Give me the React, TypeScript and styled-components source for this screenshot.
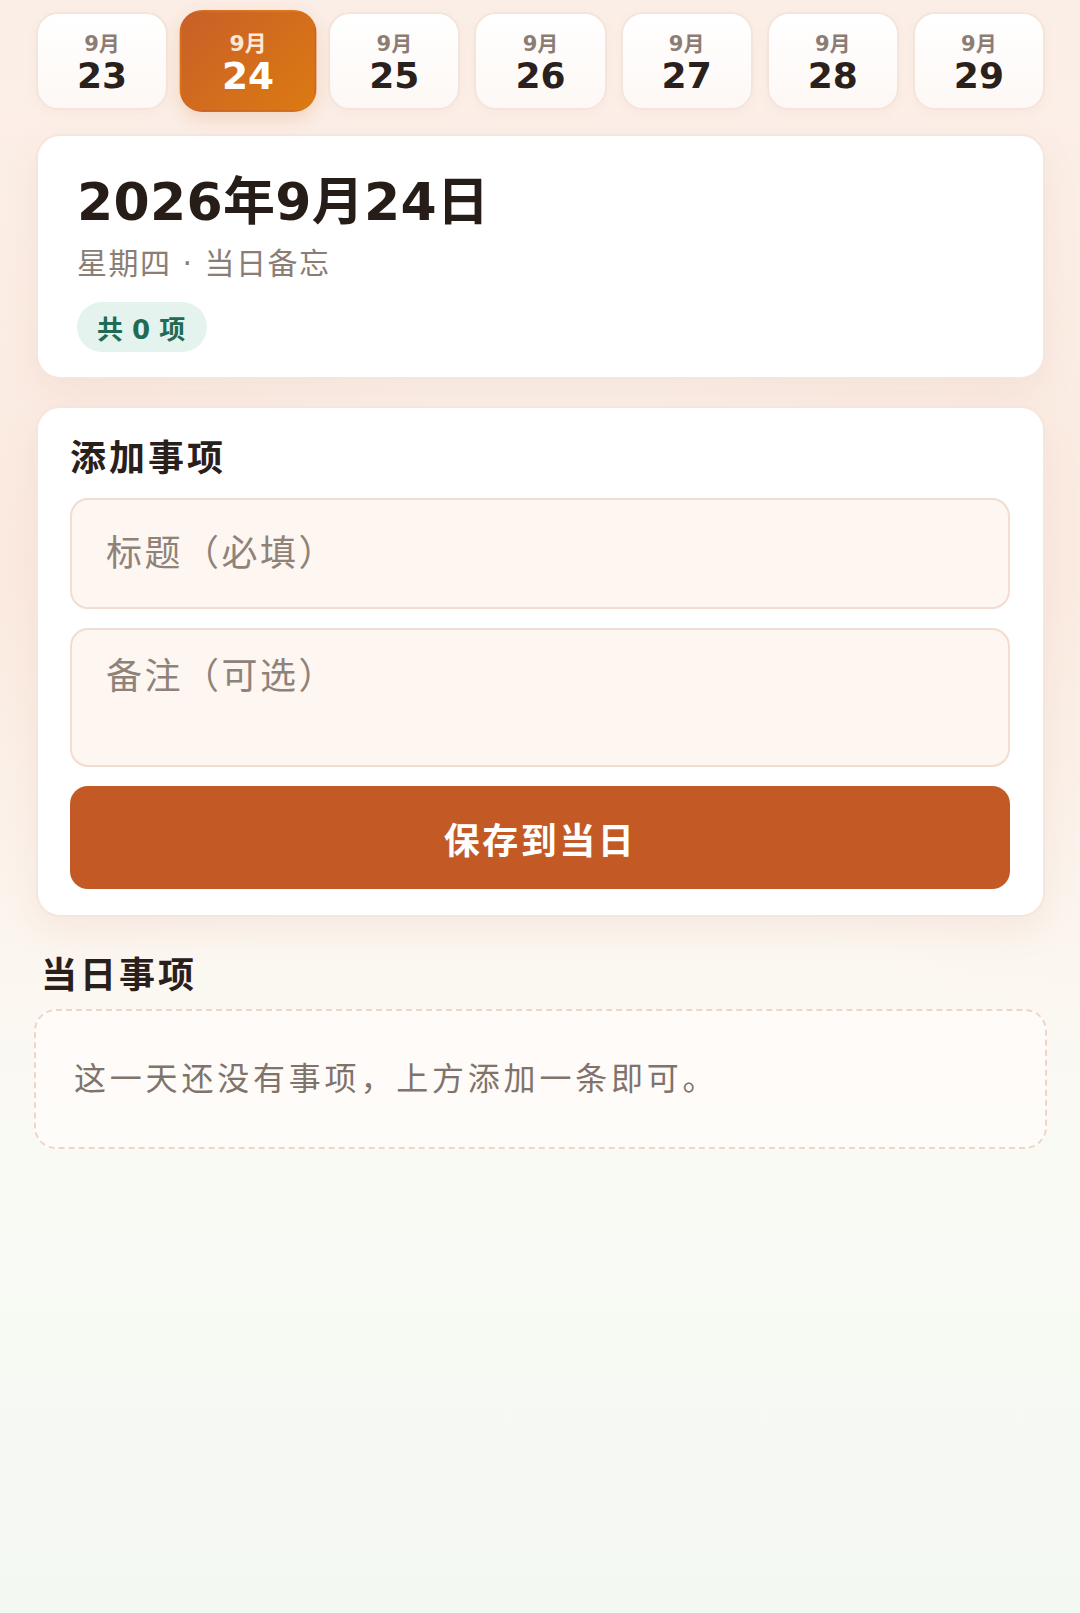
import React from "react";
import styled, { createGlobalStyle } from "styled-components";

const GlobalStyle = createGlobalStyle`
  html, body {
    margin: 0;
    padding: 0;
  }
  body {
    font-family: "DejaVu Sans", "Noto Sans CJK SC", sans-serif;
    background: #f6f8f3;
  }
  * { box-sizing: border-box; }
`;

const Page = styled.div`
  min-height: 1613px;
  padding: 12px 35px 40px 36px;
  background:
    radial-gradient(ellipse 60% 40% at 0% 35%, rgba(250, 226, 212, 0.5), rgba(250, 226, 212, 0) 70%),
    radial-gradient(ellipse 60% 40% at 100% 35%, rgba(250, 226, 212, 0.45), rgba(250, 226, 212, 0) 70%),
    linear-gradient(180deg, #fbeee6 0%, #fbf1ea 30%, #fcf7f1 58%, #f9faf4 75%, #f4f8f3 100%);
  display: flex;
  flex-direction: column;
`;

const DateStrip = styled.div`
  display: grid;
  grid-template-columns: repeat(7, 1fr);
  gap: 14px;
`;

const DateTab = styled.button<{ $active?: boolean }>`
  height: 98px;
  border-radius: 22px;
  border: 2px solid ${(p) => (p.$active ? "transparent" : "#f4e5dc")};
  background: ${(p) =>
    p.$active
      ? "linear-gradient(135deg, #c95f28 0%, #dc7a12 100%)"
      : "linear-gradient(180deg, #ffffff 0%, #fdf8f5 100%)"};
  box-shadow: ${(p) =>
    p.$active
      ? "0 6px 16px rgba(200, 100, 30, 0.18)"
      : "0 4px 12px rgba(200, 140, 110, 0.06)"};
  transform: ${(p) => (p.$active ? "scale(1.04)" : "none")};
  display: flex;
  flex-direction: column;
  align-items: center;
  justify-content: center;
  gap: 0;
  padding: 6px 0 0;
  font-family: "DejaVu Sans", "Noto Sans CJK SC", sans-serif;
  cursor: pointer;
`;

const TabMonth = styled.span<{ $active?: boolean }>`
  font-size: 21px;
  line-height: 23px;
  font-weight: 700;
  color: ${(p) => (p.$active ? "#fde8d6" : "#8c7c73")};
`;

const TabDay = styled.span<{ $active?: boolean }>`
  font-size: 36px;
  line-height: 40px;
  font-weight: 700;
  color: ${(p) => (p.$active ? "#ffffff" : "#2a211c")};
`;

const Card = styled.section`
  background: #ffffff;
  border: 2px solid #f5e6dd;
  border-radius: 24px;
  box-shadow: 0 14px 34px rgba(200, 130, 95, 0.1);
`;

const DayCard = styled(Card)`
  margin-top: 24px;
  height: 245px;
  padding: 35px 40px 0 39px;
  display: flex;
  flex-direction: column;
  align-items: flex-start;
`;

const DayTitle = styled.h1`
  margin: 0;
  font-size: 52px;
  line-height: 62px;
  font-weight: 700;
  color: #261d18;
  letter-spacing: 0.3px;
`;

const DaySub = styled.div`
  margin-top: 10px;
  font-size: 30px;
  line-height: 42px;
  color: #8a7d75;
  letter-spacing: 1.5px;
`;

const CountBadge = styled.span`
  margin-top: 17px;
  height: 50px;
  padding: 0 22px 0 20px;
  border-radius: 25px;
  background: #e4f3ed;
  color: #1f6b55;
  font-size: 26px;
  font-weight: 700;
  display: inline-flex;
  align-items: center;
`;

const FormCard = styled(Card)`
  margin-top: 27px;
  padding: 27px 33px 26px 32px;
  display: flex;
  flex-direction: column;
`;

const SectionTitle = styled.h2`
  margin: 0;
  font-size: 36px;
  line-height: 47px;
  font-weight: 700;
  color: #2a201b;
  letter-spacing: 3px;
`;

const TitleInput = styled.input`
  margin-top: 16px;
  height: 111px;
  width: 100%;
  border: 2px solid #f2ddd1;
  border-radius: 18px;
  background: #fdf6f1;
  padding: 0 34px;
  font-family: "DejaVu Sans", "Noto Sans CJK SC", sans-serif;
  font-size: 36px;
  letter-spacing: 2.5px;
  color: #2a201b;
  outline: none;
  &::placeholder {
    color: #8f8279;
  }
`;

const NoteInput = styled.textarea`
  margin-top: 19px;
  height: 139px;
  width: 100%;
  border: 2px solid #f2ddd1;
  border-radius: 18px;
  background: #fdf6f1;
  padding: 22px 34px;
  font-family: "DejaVu Sans", "Noto Sans CJK SC", sans-serif;
  font-size: 36px;
  line-height: 50px;
  letter-spacing: 2.5px;
  color: #2a201b;
  resize: none;
  outline: none;
  display: block;
  &::placeholder {
    color: #8f8279;
  }
`;

const SaveButton = styled.button`
  margin-top: 19px;
  height: 103px;
  width: 100%;
  border: none;
  border-radius: 18px;
  background: #c35a26;
  color: #ffffff;
  font-family: "DejaVu Sans", "Noto Sans CJK SC", sans-serif;
  font-size: 36px;
  font-weight: 700;
  letter-spacing: 2.5px;
  cursor: pointer;
`;

const ListSection = styled.div`
  margin-top: 35px;
  display: flex;
  flex-direction: column;
`;

const ListHeading = styled(SectionTitle)`
  padding-left: 5px;
`;

const EmptyBox = styled.div`
  margin-top: 10px;
  margin-left: -2px;
  margin-right: -2px;
  border: 2px dashed #f0d4c9;
  border-radius: 22px;
  background: rgba(255, 252, 249, 0.75);
  padding: 44px 38px;
  font-size: 32px;
  line-height: 48px;
  color: #7f736b;
  letter-spacing: 3.8px;
`;

const days = [23, 24, 25, 26, 27, 28, 29];

export default function App() {
  const selected = 24;
  const count = 0;
  return (
    <>
      <GlobalStyle />
      <Page>
        <DateStrip>
          {days.map((d) => (
            <DateTab key={d} $active={d === selected}>
              <TabMonth $active={d === selected}>9月</TabMonth>
              <TabDay $active={d === selected}>{d}</TabDay>
            </DateTab>
          ))}
        </DateStrip>

        <DayCard>
          <DayTitle>2026年9月24日</DayTitle>
          <DaySub>星期四 · 当日备忘</DaySub>
          <CountBadge>共 {count} 项</CountBadge>
        </DayCard>

        <FormCard>
          <SectionTitle>添加事项</SectionTitle>
          <TitleInput placeholder="标题（必填）" />
          <NoteInput placeholder="备注（可选）" />
          <SaveButton>保存到当日</SaveButton>
        </FormCard>

        <ListSection>
          <ListHeading>当日事项</ListHeading>
          <EmptyBox>这一天还没有事项，上方添加一条即可。</EmptyBox>
        </ListSection>
      </Page>
    </>
  );
}
